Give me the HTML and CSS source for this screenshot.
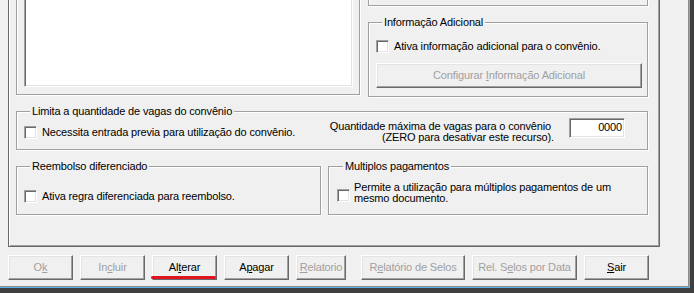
FILE: index.html
```html
<!DOCTYPE html>
<html lang="pt">
<head>
<meta charset="utf-8">
<title>Convênio</title>
<link rel="stylesheet" href="styles.css">
</head>
<body>
<div class="frame">
  <div class="frame-blue">
    <div class="client">
      <div class="panel">
        <div class="top-row">
          <div class="group list-group">
            <div class="listbox"></div>
          </div>
          <div class="right-col">
            <div class="group top-box"></div>
            <div class="group info-group">
              <div class="legend">Informação Adicional</div>
              <div class="check-row info-check"><span class="checkbox"></span><span>Ativa informação adicional para o convênio.</span></div>
              <div class="button disabled config-btn">Configurar <u>I</u>nformação Adicional</div>
            </div>
          </div>
        </div>

        <div class="group limit-group">
          <div class="legend">Limita a quantidade de vagas do convênio</div>
          <div class="limit-row">
            <div class="check-row limit-check"><span class="checkbox"></span><span>Necessita entrada previa para utilização do convênio.</span></div>
            <div class="max-field">
              <div class="max-text">
                <div class="max-l1">Quantidade máxima de vagas para o convênio</div>
                <div>(ZERO para desativar este recurso).</div>
              </div>
              <div class="textbox">0000</div>
            </div>
          </div>
        </div>

        <div class="bottom-row">
          <div class="group reemb-group">
            <div class="legend">Reembolso diferenciado</div>
            <div class="check-row reemb-check"><span class="checkbox"></span><span>Ativa regra diferenciada para reembolso.</span></div>
          </div>
          <div class="group multi-group">
            <div class="legend">Multiplos pagamentos</div>
            <div class="multi-row">
              <span class="checkbox multi-box"></span>
              <div class="multi-text">Permite a utilização para múltiplos pagamentos de um<br>mesmo documento.</div>
            </div>
          </div>
        </div>
      </div>

      <div class="buttons">
        <div class="button disabled">O<u>k</u></div>
        <div class="button disabled">In<u>c</u>luir</div>
        <div class="button">Al<u>t</u>erar</div>
        <div class="button">A<u>p</u>agar</div>
        <div class="button disabled btn-rel"><u>R</u>elatorio</div>
        <div class="button disabled btn-selos">R<u>e</u>latório de Selos</div>
        <div class="button disabled btn-data">Rel. S<u>e</u>los por Data</div>
        <div class="button"><u>S</u>air</div>
      </div>

      <span class="annotation"></span>
    </div>
  </div>
</div>
</body>
</html>
```

FILE: styles.css
```css
* { box-sizing: border-box; }

html, body {
  margin: 0;
  padding: 0;
}

body {
  width: 694px;
  height: 293px;
  overflow: hidden;
  font-family: "Liberation Sans", Arial, sans-serif;
  font-size: 11px;
  letter-spacing: -0.15px;
  color: #000;
  background: #3f3f3f;
}

.frame {
  width: 694px;
  height: 293px;
  background: #3f3f3f;
}

.frame-blue {
  width: 690px;
  height: 288px;
  border-right: 1px solid #5ab4e6;
  border-bottom: 1px solid #5ab4e6;
}

.client {
  position: relative;
  width: 689px;
  height: 287px;
  border-right: 1px solid #8c8c8c;
  border-bottom: 1px solid #8c8c8c;
  background: #f0f0f0;
  overflow: hidden;
}

.panel {
  width: 652px;
  margin: -20px 0 0 8px;
  padding: 9px 11px 31px 7px;
  border: 1px solid #696969;
  box-shadow: inset 1px 0 0 #fff, inset -1px -1px 0 #a0a0a0;
}

.group {
  border: 1px solid #a0a0a0;
  box-shadow: inset 1px 1px 0 #fff, 1px 1px 0 #fff;
}

.legend {
  width: fit-content;
  margin: -7px 0 0 6px;
  padding: 0 2px;
  line-height: 13px;
  background: #f0f0f0;
  white-space: nowrap;
}

.top-row {
  display: grid;
  grid-template-columns: 344px 280px;
  column-gap: 8px;
  align-items: start;
}

.list-group {
  height: 105px;
  padding: 7px 6px 7px 7px;
}

.listbox {
  width: 329px;
  height: 89px;
  background: #fff;
  border: 1px solid;
  border-color: #a0a0a0 #fff #fff #a0a0a0;
  box-shadow: inset 1px 1px 0 #696969, inset -1px -1px 0 #e3e3e3;
}

.top-box {
  height: 16px;
}

.info-group {
  margin-top: 16px;
  padding: 0 5px 8px 7px;
}

.check-row {
  display: flex;
  align-items: center;
  gap: 5px;
  line-height: 13px;
  white-space: nowrap;
}

.checkbox {
  flex: none;
  display: block;
  width: 13px;
  height: 13px;
  background: #fff;
  border: 1px solid;
  border-color: #a0a0a0 #fff #fff #a0a0a0;
  box-shadow: inset 1px 1px 0 #696969, inset -1px -1px 0 #e3e3e3;
}

.info-check {
  margin-top: 11px;
}

.button {
  height: 25px;
  width: 65px;
  line-height: 22px;
  padding-bottom: 1px;
  text-align: center;
  white-space: nowrap;
  background: #f0f0f0;
  border: 1px solid;
  border-color: #fff #696969 #696969 #fff;
  box-shadow: inset -1px -1px 0 #a0a0a0, inset 1px 1px 0 #e3e3e3;
}

.button.disabled {
  color: #a0a0a0;
}

.config-btn {
  width: 266px;
  margin-top: 10px;
}

.limit-group {
  margin-top: 14px;
  padding: 0 22px 6px 7px;
}

.limit-row {
  display: flex;
  justify-content: space-between;
  align-items: flex-start;
}

.limit-check {
  margin-top: 8px;
}

.max-field {
  display: flex;
  align-items: flex-start;
}

.max-text {
  margin-top: 3px;
  text-align: right;
  line-height: 11px;
  white-space: nowrap;
}

.max-l1 {
  padding-right: 3px;
}

.textbox {
  width: 56px;
  height: 20px;
  margin-left: 15px;
  padding: 2px 2px 0 0;
  line-height: 13px;
  text-align: right;
  background: #fff;
  border: 1px solid;
  border-color: #a0a0a0 #fff #fff #a0a0a0;
  box-shadow: inset 1px 1px 0 #696969, inset -1px -1px 0 #e3e3e3;
}

.bottom-row {
  display: grid;
  grid-template-columns: 305px 320px;
  column-gap: 7px;
  margin-top: 16px;
}

.reemb-group {
  padding: 0 7px 0 7px;
}

.reemb-check {
  margin-top: 17px;
}

.multi-group {
  padding: 0 8px 10px 8px;
}

.multi-row {
  display: flex;
  align-items: flex-start;
}

.multi-box {
  margin-top: 16px;
}

.multi-text {
  margin: 9px 0 0 4px;
  line-height: 11px;
  white-space: nowrap;
}

.buttons {
  display: flex;
  gap: 7px;
  margin: 8px 0 0 8px;
}

.btn-rel {
  width: 50px;
  margin-right: 8px;
}

.btn-selos {
  width: 104px;
}

.btn-data {
  width: 105px;
}

.annotation {
  position: absolute;
  left: 151px;
  top: 276px;
  width: 65px;
  height: 3px;
  border-radius: 2px;
  background: #e0141e;
}
```
